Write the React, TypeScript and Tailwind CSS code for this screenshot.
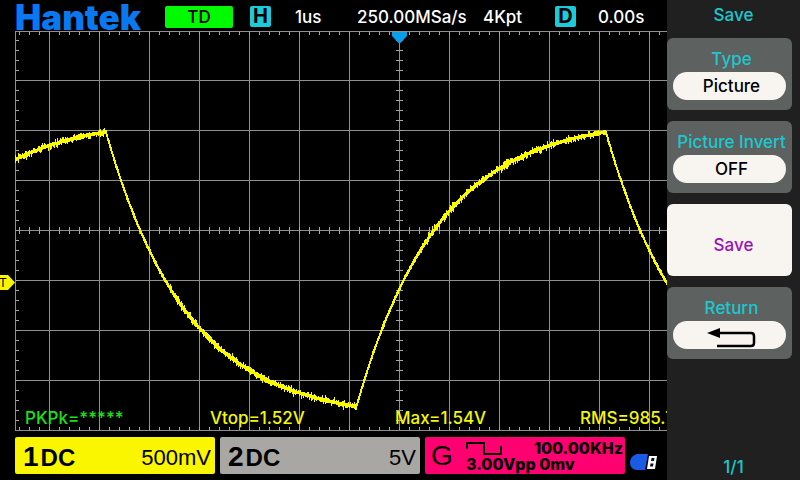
import React from 'react';

const FALL_LEVEL = 420;
const RISE_LEVEL = 118;
const TAU = 82;

function levelAt(x: number) {
  const t = (x + 394) % 500;
  if (t < 250) {
    return FALL_LEVEL - 288 * Math.exp(-t / TAU);
  }
  return RISE_LEVEL + 290 * Math.exp(-(t - 250) / TAU);
}

// repeatable noise, between 0 and 1
function noise(n: number) {
  const v = Math.sin(n * 127.1) * 43758.5453;
  return v - Math.floor(v);
}

function buildTrace() {
  let d = '';
  for (let x = 15; x < 667; x++) {
    const y = levelAt(x);
    const next = levelAt(x + 1);
    const slope = Math.abs(next - y);
    const spread = slope > 1.6 ? 1.6 : 4.4;
    const top = Math.min(y, next) - 1.3 - noise(x) * noise(x + 300) * spread;
    const bottom = Math.max(y, next) + 1.6 + noise(x + 900) * noise(x + 1500) * spread;
    d += `M${x + 0.5} ${Math.round(top)}V${Math.round(bottom)}`;
  }
  return d;
}

function buildGrid() {
  let d = 'M15.5 31V431M15 31.5H667M15 430.5H667';
  for (let x = 49; x < 667; x += 50) d += `M${x + 0.5} 31V431`;
  for (let y = 80; y < 430; y += 50) d += `M15 ${y + 0.5}H667`;
  return d;
}

function buildTicks() {
  let d = '';
  for (let x = 19; x < 667; x += 10) {
    d += `M${x + 0.5} 32V35M${x + 0.5} 227V234M${x + 0.5} 427V430`;
  }
  for (let y = 40; y < 430; y += 10) {
    d += `M16 ${y + 0.5}H19M396 ${y + 0.5}H403`;
  }
  return d;
}

const measurements = [
  { text: 'PKPk=*****', color: 'text-[#1be01b]' },
  { text: 'Vtop=1.52V', color: 'text-[#f4f800]' },
  { text: 'Max=1.54V', color: 'text-[#f4f800]' },
  { text: 'RMS=985.7', color: 'text-[#f4f800]' }
];

function StatusBar() {
  return (
    <header className="grid h-[31px] grid-cols-[150fr_85fr_45fr_62fr_126fr_72fr_43fr_69fr] items-center pl-[15px] pt-0.5 text-[17px] font-medium whitespace-nowrap text-white">
      <h1 className="text-[35px] leading-7 font-black text-[#0a78f0]">Hantek</h1>
      <div>
        <span className="block h-[22px] w-[68px] rounded-xs bg-[#00fa00] text-center leading-[22px] text-black">TD</span>
      </div>
      <span className="size-[21px] rounded-xs bg-[#1ccbd8] text-center text-xl leading-[21px] font-bold text-black">H</span>
      <span className="pt-0.5">1us</span>
      <span className="pt-0.5">250.00MSa/s</span>
      <span className="pt-0.5">4Kpt</span>
      <span className="size-[21px] rounded-xs bg-[#1ccbd8] text-center text-xl leading-[21px] font-bold text-black">D</span>
      <span className="pt-0.5">0.00s</span>
    </header>
  );
}

function Plot() {
  return (
    <div className="relative overflow-hidden">
      <svg viewBox="0 31 667 400" className="block w-full" fill="none">
        <path d={buildGrid()} stroke="#8f8f8f" shapeRendering="crispEdges" />
        <path d={buildTicks()} stroke="#a8a8a8" shapeRendering="crispEdges" />
        <path d="M392 32H407V36L400.500 43H398.500L392 36Z" fill="#0a9fe6" />
        <path d={buildTrace()} stroke="#fafa00" shapeRendering="crispEdges" />
        <path d="M0 275H8L15 282.500L8 290H0Z" fill="#f6f600" />
        <text x="3" y="287" textAnchor="middle" fontSize="12" fill="#000" className="font-['Liberation_Sans',sans-serif]">T</text>
      </svg>
      <ul className="absolute bottom-[3px] left-[25px] grid grid-cols-[repeat(4,185px)] text-[17px] leading-5 font-medium whitespace-nowrap">
        {measurements.map((m) => (
          <li key={m.text} className={m.color}>{m.text}</li>
        ))}
      </ul>
    </div>
  );
}

interface ChannelProps {
  number: string;
  scale: string;
  color: string;
}

function Channel({ number, scale, color }: ChannelProps) {
  return (
    <div className={`flex h-[37px] items-center justify-between rounded-xs pt-1 pr-1 pl-2 font-['Liberation_Sans',sans-serif] text-[22px] text-black ${color}`}>
      <span className="flex items-baseline gap-0.5 font-['Liberation_Sans_Narrow','Liberation_Sans',sans-serif] text-2xl leading-7 font-bold">
        <span className="text-[28px]">{number}</span>DC
      </span>
      <span>{scale}</span>
    </div>
  );
}

function Generator() {
  return (
    <div className="flex h-[37px] items-center rounded-xs bg-[#ff0070] pr-0.5 pl-1.5 text-black">
      <span className="w-[35px] font-['Liberation_Sans',sans-serif] text-[28px]">G</span>
      <div className="flex-1 text-base leading-4 font-extrabold whitespace-nowrap">
        <div className="flex items-center justify-between">
          <svg width="37" height="14" viewBox="0 0 37 14" fill="none" stroke="#000" strokeWidth="2">
            <path d="M1 8V2H18V13H35V5" />
          </svg>
          <span>100.00KHz</span>
        </div>
        <div>3.00Vpp 0mv</div>
      </div>
    </div>
  );
}

function UsbIcon() {
  return (
    <svg width="28" height="18" viewBox="0 0 28 18" fill="none" className="mt-3">
      <path d="M7 1H18L15 17H6C2 16 0 13 0 10C0 5 3 2 7 1Z" fill="#1a5be6" />
      <path d="M19 3H27L25 16H17Z" fill="#fff" />
      <path d="M21.500 5H24.500L24 8H21ZM20.500 10.500H23.500L23 13.500H20Z" fill="#111" />
    </svg>
  );
}

interface MenuButtonProps {
  label: string;
  children: React.ReactNode;
}

function MenuButton({ label, children }: MenuButtonProps) {
  return (
    <button type="button" className="flex h-[72px] flex-col items-center rounded-md bg-[#5d615f] px-1.5 pt-[11px] whitespace-nowrap">
      <span className="pl-1 leading-5 text-[#1cc8d0]">{label}</span>
      <span className="mt-[3px] flex h-7 w-full items-center justify-center rounded-full bg-[#f8f5f1] pt-0.5 pl-1 text-black">{children}</span>
    </button>
  );
}

function SideMenu() {
  return (
    <aside className="flex w-[133px] shrink-0 flex-col bg-[#202020] pr-2 text-[17px] font-medium">
      <h2 className="h-[38px] pt-[5px] pl-2 text-center leading-5 text-[#1cc8d0]">Save</h2>
      <div className="flex flex-col gap-[11px]">
        <MenuButton label="Type">Picture</MenuButton>
        <MenuButton label="Picture Invert">OFF</MenuButton>
        <button type="button" className="h-[72px] rounded-md bg-[#f8f5f1] pt-3 pl-2 text-[#9a10b8]">Save</button>
        <MenuButton label="Return">
          <svg width="50" height="20" viewBox="0 0 50 20" fill="none" className="mt-1">
            <path d="M11 5H44Q47 5 47 8V15Q47 18 44 18H10" stroke="#000" strokeWidth="2.500" />
            <path d="M0 5L13 0V10Z" fill="#000" />
          </svg>
        </MenuButton>
      </div>
      <p className="mt-auto pb-[3px] pl-2 text-center leading-5 text-[#1cc8d0]">1/1</p>
    </aside>
  );
}

export default function App() {
  return (
    <div className="flex min-h-screen bg-black font-['Inter','Liberation_Sans',sans-serif]">
      <main className="min-w-0 flex-1">
        <StatusBar />
        <Plot />
        <footer className="mt-1.5 grid grid-cols-[1fr_1fr_1fr_28px] items-center gap-[5px] pr-[9px] pl-[15px]">
          <Channel number="1" scale="500mV" color="bg-[#faf600]" />
          <Channel number="2" scale="5V" color="bg-[#a9a7a3]" />
          <Generator />
          <UsbIcon />
        </footer>
      </main>
      <SideMenu />
    </div>
  );
}
